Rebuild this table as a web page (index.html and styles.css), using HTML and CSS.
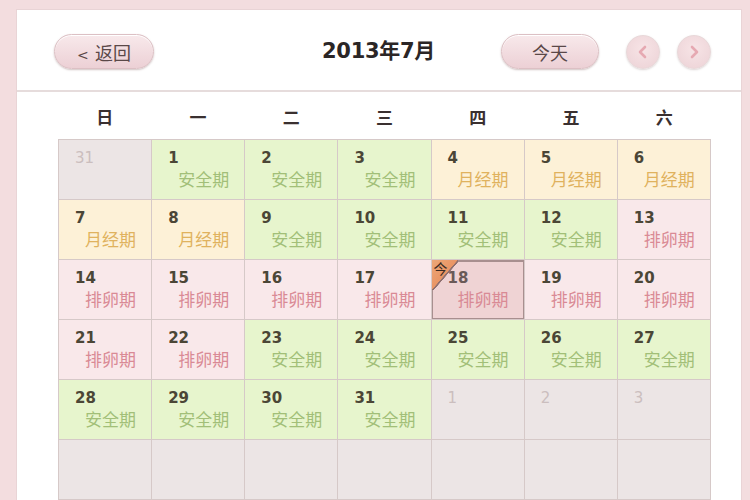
FILE: index.html
```html
<!DOCTYPE html>
<html lang="zh-CN">
<head>
<meta charset="utf-8">
<title>2013年7月</title>
<link rel="stylesheet" href="styles.css">
</head>
<body>
<div class="panel">
  <div class="header">
    <div class="left">
      <button class="pill back"><span class="lt">&lt;</span> 返回</button>
    </div>
    <div class="title">2013年7月</div>
    <div class="right">
      <button class="pill today-btn">今天</button>
      <button class="circle"><svg width="12" height="14" viewBox="0 0 12 14"><path d="M8 2 L3 7 L8 12" fill="none" stroke="#e6a9b2" stroke-width="2.6" stroke-linecap="round" stroke-linejoin="round"/></svg></button>
      <button class="circle"><svg width="12" height="14" viewBox="0 0 12 14"><path d="M4 2 L9 7 L4 12" fill="none" stroke="#e6a9b2" stroke-width="2.6" stroke-linecap="round" stroke-linejoin="round"/></svg></button>
    </div>
  </div>
  <div class="weekdays">
    <div>日</div><div>一</div><div>二</div><div>三</div><div>四</div><div>五</div><div>六</div>
  </div>
  <div class="grid">
    <div class="cell other"><span class="num">31</span></div>
    <div class="cell safe"><span class="num">1</span><span class="lbl">安全期</span></div>
    <div class="cell safe"><span class="num">2</span><span class="lbl">安全期</span></div>
    <div class="cell safe"><span class="num">3</span><span class="lbl">安全期</span></div>
    <div class="cell period"><span class="num">4</span><span class="lbl">月经期</span></div>
    <div class="cell period"><span class="num">5</span><span class="lbl">月经期</span></div>
    <div class="cell period"><span class="num">6</span><span class="lbl">月经期</span></div>

    <div class="cell period"><span class="num">7</span><span class="lbl">月经期</span></div>
    <div class="cell period"><span class="num">8</span><span class="lbl">月经期</span></div>
    <div class="cell safe"><span class="num">9</span><span class="lbl">安全期</span></div>
    <div class="cell safe"><span class="num">10</span><span class="lbl">安全期</span></div>
    <div class="cell safe"><span class="num">11</span><span class="lbl">安全期</span></div>
    <div class="cell safe"><span class="num">12</span><span class="lbl">安全期</span></div>
    <div class="cell ovul"><span class="num">13</span><span class="lbl">排卵期</span></div>

    <div class="cell ovul"><span class="num">14</span><span class="lbl">排卵期</span></div>
    <div class="cell ovul"><span class="num">15</span><span class="lbl">排卵期</span></div>
    <div class="cell ovul"><span class="num">16</span><span class="lbl">排卵期</span></div>
    <div class="cell ovul"><span class="num">17</span><span class="lbl">排卵期</span></div>
    <div class="cell ovul today"><span class="corner"></span><span class="jin">今</span><span class="num">18</span><span class="lbl">排卵期</span></div>
    <div class="cell ovul"><span class="num">19</span><span class="lbl">排卵期</span></div>
    <div class="cell ovul"><span class="num">20</span><span class="lbl">排卵期</span></div>

    <div class="cell ovul"><span class="num">21</span><span class="lbl">排卵期</span></div>
    <div class="cell ovul"><span class="num">22</span><span class="lbl">排卵期</span></div>
    <div class="cell safe"><span class="num">23</span><span class="lbl">安全期</span></div>
    <div class="cell safe"><span class="num">24</span><span class="lbl">安全期</span></div>
    <div class="cell safe"><span class="num">25</span><span class="lbl">安全期</span></div>
    <div class="cell safe"><span class="num">26</span><span class="lbl">安全期</span></div>
    <div class="cell safe"><span class="num">27</span><span class="lbl">安全期</span></div>

    <div class="cell safe"><span class="num">28</span><span class="lbl">安全期</span></div>
    <div class="cell safe"><span class="num">29</span><span class="lbl">安全期</span></div>
    <div class="cell safe"><span class="num">30</span><span class="lbl">安全期</span></div>
    <div class="cell safe"><span class="num">31</span><span class="lbl">安全期</span></div>
    <div class="cell other"><span class="num">1</span></div>
    <div class="cell other"><span class="num">2</span></div>
    <div class="cell other"><span class="num">3</span></div>

    <div class="cell other"></div>
    <div class="cell other"></div>
    <div class="cell other"></div>
    <div class="cell other"></div>
    <div class="cell other"></div>
    <div class="cell other"></div>
    <div class="cell other"></div>
  </div>
</div>
</body>
</html>
```
FILE: styles.css
```css
html, body {
  margin: 0;
  padding: 0;
  background: #f3dddf;
  overflow: hidden;
}
body {
  padding: 9px 7px 0 16px;
  font-family: "Noto Sans CJK SC", sans-serif;
}
.panel {
  width: 724px;
  height: 520px;
  background: #fff;
  border: 1px solid #e9d4d6;
}
.header {
  height: 80px;
  border-bottom: 2px solid #e6dcdc;
  display: grid;
  grid-template-columns: 1fr auto 1fr;
  align-items: center;
  padding: 0 30px 0 37px;
}
.left { display: flex; }
.right { display: flex; justify-content: flex-end; align-items: center; }
.title {
  font-family: "DejaVu Sans", "Noto Sans CJK SC", sans-serif;
  font-weight: bold;
  font-size: 21px;
  color: #2b2626;
  letter-spacing: -0.3px;
  margin-top: -2px;
  margin-right: 8px;
}
.pill {
  height: 35px;
  border-radius: 18px;
  border: 1px solid #dcc0c4;
  background: linear-gradient(#f8e9eb, #ecd0d5);
  box-shadow: 0 1px 2px rgba(120, 80, 80, 0.35), inset 0 1px 0 #fff;
  color: #5a4848;
  font-family: "Noto Sans CJK SC", sans-serif;
  font-size: 18px;
  padding: 0;
  margin-top: 3px;
}
.back { width: 100px; }
.lt { font-family: "DejaVu Sans", sans-serif; font-size: 14px; margin-right: 2px; }
.today-btn { width: 98px; margin-right: 10px; }
.circle {
  width: 34px;
  height: 34px;
  border-radius: 50%;
  border: 1px solid #e8d8d9;
  background: radial-gradient(circle at 50% 40%, #f7e4e6, #ecd2d6);
  box-shadow: 0 1px 2px rgba(120, 90, 90, 0.25);
  display: flex;
  align-items: center;
  justify-content: center;
  padding: 0;
  margin-left: 17px;
  margin-top: 3px;
}
.weekdays {
  margin: 0 30px 0 41px;
  height: 45px;
  display: grid;
  grid-template-columns: repeat(7, 1fr);
  align-items: center;
  text-align: center;
  font-weight: bold;
  font-size: 17px;
  color: #3a3030;
  padding-top: 2px;
}
.grid {
  margin: 0 30px 0 41px;
  display: grid;
  grid-template-columns: repeat(7, 1fr);
  grid-auto-rows: 59px;
  gap: 1px;
  background: #d6c9c8;
  border: 1px solid #d6c9c8;
}
.cell {
  position: relative;
  display: flex;
  flex-direction: column;
  padding-top: 9px;
}
.num {
  font-family: "DejaVu Sans", sans-serif;
  font-weight: bold;
  font-size: 15px;
  line-height: 18px;
  padding-left: 16px;
  color: #4b4636;
}
.lbl {
  font-size: 17px;
  line-height: 20px;
  margin-top: 2px;
  padding-left: 26px;
}
.other { background: #ece5e5; }
.other .num { color: #cbbebe; font-weight: normal; }
.safe { background: #e7f5cd; }
.safe .lbl { color: #a2bf78; }
.period { background: #fdf1d7; }
.period .lbl { color: #e0b25e; }
.ovul { background: #f9e8ea; }
.ovul .lbl { color: #d98a95; }
.today {
  background: #efd3d4;
  box-shadow: inset 0 0 0 1px #a88f8f, inset 0 2px 0 #a88f8f;
}
.today .num { color: #6a5a58; }
.corner {
  position: absolute;
  left: 0;
  top: 0;
  width: 26px;
  height: 30px;
  background: linear-gradient(to bottom right, #eca878 0%, #e99565 49%, #8f7070 50%, #8f7070 53%, transparent 54%);
}
.jin {
  position: absolute;
  left: 2px;
  top: 0;
  font-size: 14px;
  line-height: 16px;
  color: #3a2a22;
}
```
